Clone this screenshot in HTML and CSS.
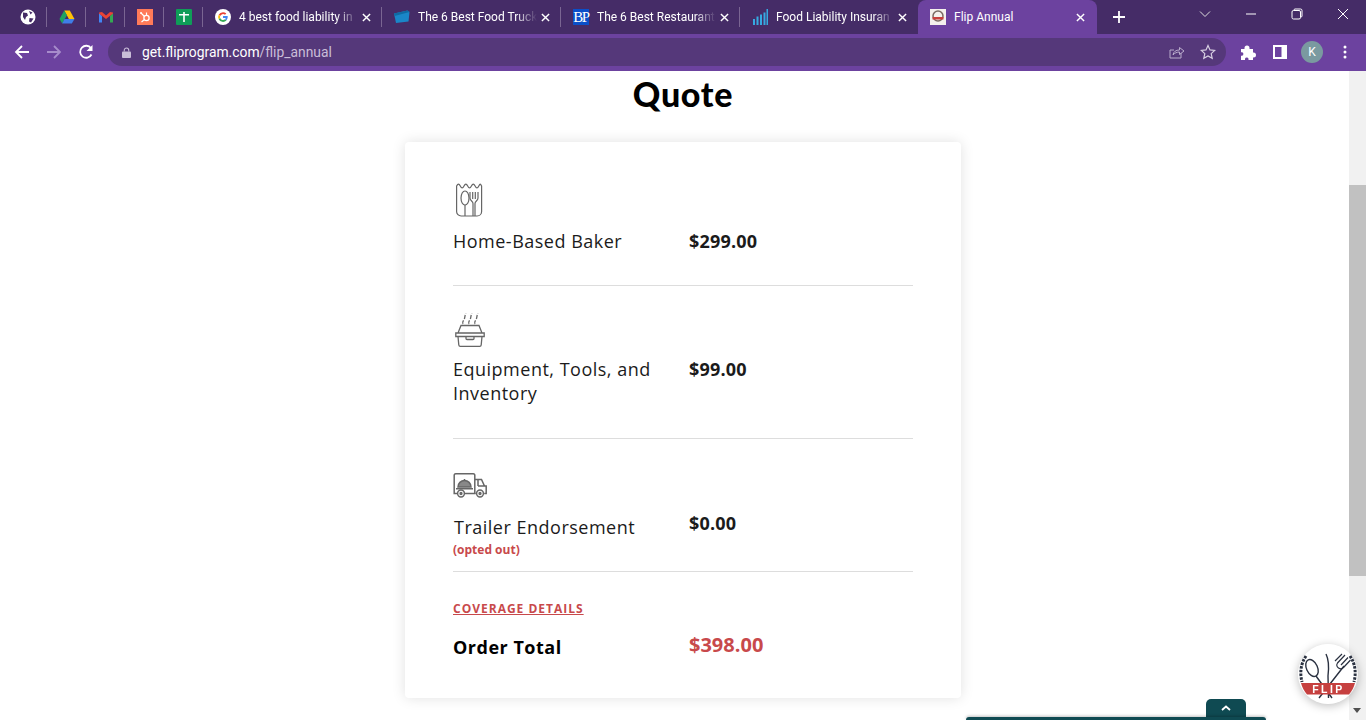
FILE: index.html
```html
<!DOCTYPE html>
<html>
<head>
    <title>Flip Annual</title>
    <link rel="stylesheet" href="styles.css">
</head>
<body>
    <svg class="defs" width="0" height="0">
        <symbol id="x" viewBox="0 0 10 10"><path d="M1 1l8 8M9 1l-8 8" fill="none" stroke="#fff" stroke-width="1.600"/></symbol>
    </svg>

    <!-- Tab strip -->
    <div class="tabstrip">
        <div class="tab pinned">
            <svg class="fav" viewBox="0 0 16 16"><circle cx="8" cy="8" r="7.500" fill="#fff"/><path d="M3 3.500l4 .5 1 2.500-2 1.500-1 3-2-3zM9 2l3.500 1.500-2 2zM9.500 9l4 .5-2.500 4-2-1z" fill="#452c67"/></svg>
        </div>
        <div class="tab pinned">
            <svg class="fav" viewBox="0 0 16 16"><path d="M5.200 1.500h5.600l4.700 8.500h-5.600z" fill="#ffc107"/><path d="M5.200 1.500L.5 10l2.700 4.500L8 6.300z" fill="#1ea362"/><path d="M5.500 10h10l-2.700 4.500H3.200z" fill="#3f7ee8"/></svg>
        </div>
        <div class="tab pinned">
            <svg class="fav" viewBox="0 0 16 16"><path d="M1 4v9.500h3V7z" fill="#4285f4"/><path d="M12 7v6.500h3V4z" fill="#34a853"/><path d="M1 3.500l3-.5 4 3.500L12 3l3 .5v1L8 10 1 4.500z" fill="#ea4335"/></svg>
        </div>
        <div class="tab pinned">
            <svg class="fav" viewBox="0 0 16 16"><rect width="16" height="16" fill="#ff7a59"/><circle cx="9.500" cy="9" r="2.600" fill="none" stroke="#fff" stroke-width="1.300"/><path d="M9.500 3.500v3M4 4l3.500 3.500M4.500 13l3-2.500" stroke="#fff" stroke-width="1.200"/><circle cx="4" cy="4" r="1" fill="#fff"/></svg>
        </div>
        <div class="tab pinned">
            <svg class="fav" viewBox="0 0 16 16"><rect width="16" height="16" rx="1" fill="#0f9d58"/><path d="M3 5h10v1.600H3zM7.200 3h1.600v10H7.200z" fill="#fff"/></svg>
        </div>
        <div class="tab">
            <svg class="fav" viewBox="0 0 16 16"><circle cx="8" cy="8" r="8" fill="#fff"/><path d="M8 3.200a4.800 4.800 0 0 1 3.300 1.300l-1.300 1.300A3 3 0 0 0 5.200 7L3.700 5.800A4.800 4.800 0 0 1 8 3.200z" fill="#ea4335"/><path d="M3.700 5.800L5.200 7a3 3 0 0 0 0 2L3.700 10.200a4.800 4.800 0 0 1 0-4.400z" fill="#fbbc05"/><path d="M3.700 10.200L5.200 9A3 3 0 0 0 10 10.300l1.400 1.200A4.800 4.800 0 0 1 3.700 10.200z" fill="#34a853"/><path d="M12.700 7.100H8v1.900h2.700a2.300 2.300 0 0 1-.7 1.300l1.400 1.200a4.800 4.800 0 0 0 1.300-4.400z" fill="#4285f4"/></svg>
            <span class="tab-title">4 best food liability in</span>
            <svg class="tab-x"><use href="#x"/></svg>
        </div>
        <div class="tab">
            <svg class="fav" viewBox="0 0 16 16"><path d="M0 4.500l13.500-3 2 1.500-1 9.500-12.500 1.500z" fill="#1a86c8"/><path d="M0 4.500l13.500-3 2 1.500L.5 7z" fill="#0f6aa3"/></svg>
            <span class="tab-title">The 6 Best Food Truck</span>
            <svg class="tab-x"><use href="#x"/></svg>
        </div>
        <div class="tab">
            <span class="fav bp">BP</span>
            <span class="tab-title">The 6 Best Restaurant</span>
            <svg class="tab-x"><use href="#x"/></svg>
        </div>
        <div class="tab tab-last">
            <svg class="fav" viewBox="0 0 16 16"><path d="M1 10h2v6H1zM4.500 7.500h2V16h-2zM8 5.500h2V16H8zM11.500 3.500h2V16h-2zM14.500 0h1.500v16h-1.500z" fill="#36a9e1"/></svg>
            <span class="tab-title">Food Liability Insuran</span>
            <svg class="tab-x"><use href="#x"/></svg>
        </div>
        <div class="tab active">
            <svg class="fav" viewBox="0 0 16 16"><rect width="16" height="16" fill="#f4f0ec"/><circle cx="8" cy="7" r="5" fill="none" stroke="#7a6a62" stroke-width="1.500"/><rect x="2.500" y="8" width="11" height="2.500" fill="#c8403c"/></svg>
            <span class="tab-title">Flip Annual</span>
            <svg class="tab-x"><use href="#x"/></svg>
        </div>
        <svg class="new-tab" viewBox="0 0 12 12"><path d="M6 0v12M0 6h12" stroke="#fff" stroke-width="1.800"/></svg>
        <div class="win-controls">
            <svg class="win-btn chevron" viewBox="0 0 12 12"><path d="M1 3.500l5 5 5-5" fill="none" stroke="#ddd" stroke-width="1"/></svg>
            <svg class="win-btn" viewBox="0 0 12 12"><path d="M1 6h10" stroke="#fff" stroke-width="1"/></svg>
            <svg class="win-btn" viewBox="0 0 12 12"><path d="M3 2.500V2a1 1 0 0 1 1-1h5.500A1.500 1.500 0 0 1 11 2.500V8a1 1 0 0 1-1 1h-.5" fill="none" stroke="#fff"/><rect x="1" y="2.500" width="8.500" height="8.500" rx="1.500" fill="none" stroke="#fff"/></svg>
            <svg class="win-btn" viewBox="0 0 12 12"><path d="M1 1l10 10M11 1L1 11" stroke="#fff" stroke-width="1"/></svg>
        </div>
    </div>

    <!-- Toolbar -->
    <div class="toolbar">
        <svg class="nav-btn" viewBox="0 0 16 16"><path d="M15 8H2M8 2L2 8l6 6" fill="none" stroke="#fff" stroke-width="1.800"/></svg>
        <svg class="nav-btn" viewBox="0 0 16 16"><path d="M1 8h13M8 2l6 6-6 6" fill="none" stroke="#a78ccb" stroke-width="1.800"/></svg>
        <svg class="nav-btn" viewBox="0 0 16 16"><path d="M13.500 10.500A6 6 0 1 1 13 4.200" fill="none" stroke="#fff" stroke-width="1.800"/><path d="M14.500 1v6h-6z" fill="#fff"/></svg>
        <div class="omnibox">
            <svg class="lock" viewBox="0 0 10 12"><path d="M2.500 5V3.500a2.500 2.500 0 0 1 5 0V5" fill="none" stroke="#c9bdd8" stroke-width="1.200"/><rect y="5" width="10" height="7" rx="1" fill="#c9bdd8"/></svg>
            <span class="url">get.fliprogram.com<span class="url-path">/flip_annual</span></span>
            <svg class="omni-icon" viewBox="0 0 16 16"><path d="M12 9v5H1V6h4" fill="none" stroke="#b9abcb" stroke-width="1"/><path d="M4 11c.5-3.500 3-5 6.500-5V3.500L15 7l-4.500 3.500V8C8 8 5.500 9 4 11z" fill="none" stroke="#b9abcb" stroke-width="1"/></svg>
            <svg class="omni-icon star" viewBox="0 0 16 16"><path d="M8 1.500l2 4.400 4.700.5-3.500 3.200 1 4.700L8 11.900l-4.200 2.400 1-4.700L1.300 6.400 6 5.900z" fill="none" stroke="#d8d0e2" stroke-width="1.200"/></svg>
        </div>
        <svg class="tool-btn puzzle" viewBox="0 0 15 15"><path d="M0 4h3.500V3a2.500 2.500 0 0 1 5 0v1H12v3.500h.5a2.500 2.500 0 0 1 0 5H12V15H7.500v-1.200a1.800 1.800 0 0 0-3.500 0V15H0v-4.200h1a1.800 1.800 0 0 0 0-3.500H0z" fill="#fff"/></svg>
        <svg class="tool-btn panel" viewBox="0 0 14 14"><path d="M0 0h14v14H0zM2 2v10h6.500V2z" fill="#fff" fill-rule="evenodd"/></svg>
        <span class="avatar">K</span>
        <svg class="menu-btn" viewBox="0 0 4 14"><circle cx="2" cy="2" r="1.500" fill="#fff"/><circle cx="2" cy="7" r="1.500" fill="#fff"/><circle cx="2" cy="12" r="1.500" fill="#fff"/></svg>
    </div>

    <div class="viewport">
        <div class="page">
            <h1 class="page-title">Quote</h1>
            <div class="card">
                <div class="item item-first">
                    <svg class="item-icon" width="28" height="34" viewBox="0 0 28 34" fill="none" stroke="#666" stroke-width="1.200">
                        <path d="M.6 3c1.300-2.600 2.400-2.600 3.700 0s2.400 2.600 3.700 0 2.400-2.600 3.700 0 2.400 2.600 3.700 0 2.400-2.600 3.700 0 2.400 2.600 3.700 0 1.500-2.600 2.800 0v25.500a4.500 4.500 0 0 1-4.500 4.500H5.100a4.500 4.500 0 0 1-4.500-4.500z"/>
                        <ellipse cx="9" cy="15" rx="4" ry="7"/>
                        <path d="M9 22v11M14 9v6c0 3 3 3 3 5.500V33M22 9v6c0 3-3 3-3 5.500V33M16.700 9v7M19.300 9v7"/>
                    </svg>
                    <div class="item-row">
                        <div class="item-name">Home-Based Baker</div>
                        <div class="item-price">$299.00</div>
                    </div>
                </div>
                <div class="item item-second">
                    <svg class="item-icon" width="30" height="34" viewBox="0 0 30 34" fill="none" stroke="#666" stroke-width="1.300">
                        <path d="M8 11c-1.500-2 1-3.500 1.500-5.500S10 2 11 .5M14 11c-1.500-2 1-3.500 1.500-5.500S16 2 17 .5M20 11c-1.500-2 1-3.500 1.500-5.500S22 2 23 .5" stroke-dasharray="4 1.500"/>
                        <path d="M6 12.500h18l3 7.500H3zM.8 20h28.400v3.500H.8zM3 23.500l.8 8.500a1.500 1.500 0 0 0 1.500 1.300h19.400a1.500 1.500 0 0 0 1.500-1.300l.8-8.500M11 23.500v2a1 1 0 0 0 1 1h6a1 1 0 0 0 1-1v-2"/>
                    </svg>
                    <div class="item-row">
                        <div class="item-name">Equipment, Tools, and Inventory</div>
                        <div class="item-price">$99.00</div>
                    </div>
                </div>
                <div class="item item-third">
                    <svg class="item-icon" width="34" height="25" viewBox="0 0 34 25" fill="none" stroke="#666" stroke-width="1.500">
                        <path d="M4 20.500H1.200V2A1.500 1.500 0 0 1 2.700.8h17.600a1.500 1.500 0 0 1 1.500 1.200v18.500H12M21.800 6.500h6.700l3 6.500h1.700v7.500h-2M21.800 20.500h1M25 13h6.500M25 6.500V13"/>
                        <path d="M5 14a6.500 6.500 0 0 1 13 0z" fill="#888"/>
                        <path d="M3 15.800h17M11.500 7.500V6"/>
                        <circle cx="8" cy="20.500" r="3.400"/><circle cx="8" cy="20.500" r=".9"/>
                        <circle cx="27" cy="20.500" r="3.400"/><circle cx="27" cy="20.500" r=".9"/>
                    </svg>
                    <div class="item-row">
                        <div>
                            <div class="item-name trailer-name">Trailer Endorsement</div>
                            <div class="opted">(opted out)</div>
                        </div>
                        <div class="item-price">$0.00</div>
                    </div>
                </div>
                <a class="coverage" href="#">Coverage Details</a>
                <div class="item-row total-row">
                    <div class="total-label">Order Total</div>
                    <div class="total-price">$398.00</div>
                </div>
            </div>
        </div>
        <div class="scrollbar">
            <div class="scroll-thumb"></div>
            <div class="scroll-arrow"></div>
        </div>
    </div>

    <!-- Floating bits over the page -->
    <div class="drawer">
        <div class="drawer-tab">
            <svg viewBox="0 0 10 6" width="10" height="6"><path d="M1 5l4-3.500L9 5" fill="none" stroke="#fff" stroke-width="1.800"/></svg>
        </div>
        <div class="drawer-bar"></div>
    </div>
    <div class="badge">
        <svg viewBox="0 0 60 60" width="60" height="60">
            <circle cx="30" cy="30" r="29.500" fill="#fff"/>
            <path d="M8 12C2 21 2 30 4 38M52 12c6 9 6 18 4 26" fill="none" stroke="#2a3140" stroke-width="3" stroke-dasharray="2.500 1.200"/>
            <ellipse cx="14" cy="24" rx="5.500" ry="9" transform="rotate(-25 14 24)" fill="none" stroke="#2a3140" stroke-width="1.400"/>
            <path d="M18 32l16 22M28 10c2.500 5 3 14 2 22l.5 22M46 22L21 54" fill="none" stroke="#2a3140" stroke-width="1.400"/>
            <path d="M47 11l-7.500 8c-1.500 2-.5 4 1 5s3.500 1.500 5-.5l7-7.500M50 13.500l-7 7.500M44 10l-7 7" fill="none" stroke="#2a3140" stroke-width="1.200"/>
            <path d="M3 39h54c-1 4-3 8-6 11.500H9C6 47 4 43 3 39z" fill="#c6403f"/>
            <text class="badge-text" x="30.500" y="49" text-anchor="middle">FLIP</text>
        </svg>
    </div>
</body>
</html>
```
FILE: styles.css
```css
body {
    margin: 0;
    height: 720px;
    overflow: hidden;
    background-color: #fff;
    font-family: "Open Sans", Arial, sans-serif;
    color: #1b1b1b;
}

.defs {
    display: block;
    height: 0;
}

/* Tab strip */
.tabstrip {
    display: flex;
    align-items: stretch;
    height: 34px;
    padding-left: 8px;
    background-color: #452c67;
    color: #fff;
    font-family: Roboto, Arial, sans-serif;
    font-size: 12px;
}

.tab {
    display: flex;
    align-items: center;
    box-sizing: border-box;
    width: 179px;
    height: 20px;
    margin-top: 7px;
    padding: 0 10px 0 12px;
    border-right: 1px solid #7a6592;
}

.tab.pinned {
    width: 39px;
    padding: 0 0 0 12px;
}

.tab.tab-last {
    width: 178px;
    border-right-color: transparent;
}

.tab.active {
    height: 34px;
    margin-top: 0;
    padding-right: 12px;
    border: 0;
    border-radius: 8px 8px 0 0;
    background-color: #6c429f;
}

.fav {
    flex: none;
    display: block;
    width: 16px;
    height: 16px;
}

.fav.bp {
    background-color: #0b4fc9;
    color: #fff;
    font-family: "Liberation Serif", serif;
    font-size: 15px;
    line-height: 16px;
    text-align: center;
    letter-spacing: -1.500px;
}

.tab-title {
    flex: 1;
    min-width: 0;
    margin-left: 8px;
    white-space: nowrap;
    -webkit-mask-image: linear-gradient(to right, #000 82%, transparent 100%);
    mask-image: linear-gradient(to right, #000 82%, transparent 100%);
}

.tab.active .tab-title {
    -webkit-mask-image: none;
    mask-image: none;
}

.tab-x {
    flex: none;
    width: 9px;
    height: 9px;
    margin-left: 4px;
}

.new-tab {
    align-self: center;
    width: 12px;
    height: 12px;
    margin-left: 16px;
}

.win-controls {
    display: flex;
    align-items: center;
    margin-left: auto;
    padding-right: 17px;
    padding-bottom: 6px;
}

.win-btn {
    display: block;
    width: 12px;
    height: 12px;
    margin-left: 34px;
}

/* Toolbar */
.toolbar {
    display: flex;
    align-items: center;
    box-sizing: border-box;
    height: 37px;
    padding: 0 0 1px 14px;
    background-color: #6c429f;
}

.nav-btn {
    flex: none;
    width: 16px;
    height: 16px;
    margin-right: 16px;
}

.omnibox {
    display: flex;
    align-items: center;
    box-sizing: border-box;
    flex: none;
    width: 1118px;
    height: 28px;
    margin-left: -2px;
    padding: 0 10px 0 14px;
    border-radius: 14px;
    background-color: #55387a;
}

.lock {
    width: 9px;
    height: 11px;
    margin-right: 11px;
}

.url {
    flex: 1;
    color: #fff;
    font-family: Roboto, Arial, sans-serif;
    font-size: 13.850px;
}

.url-path {
    color: #c9bdd8;
}

.omni-icon {
    width: 16px;
    height: 16px;
}

.omni-icon.star {
    margin-left: 15px;
}

.tool-btn {
    flex: none;
}

.puzzle {
    width: 15px;
    height: 15px;
    margin-left: 15px;
}

.panel {
    width: 14px;
    height: 14px;
    margin-left: 17px;
}

.avatar {
    flex: none;
    width: 22px;
    height: 22px;
    margin-left: 14px;
    border-radius: 50%;
    background-color: #7a9aa0;
    color: #fff;
    font-family: Roboto, Arial, sans-serif;
    font-size: 12px;
    line-height: 22px;
    text-align: center;
}

.menu-btn {
    flex: none;
    width: 4px;
    height: 14px;
    margin-left: 20px;
}

/* Page */
.viewport {
    display: flex;
    height: 649px;
}

.page {
    flex: 1;
    padding-left: 405px;
}

.page-title {
    width: 556px;
    margin: 0;
    color: #000;
    font-family: Lato, Arial, sans-serif;
    font-size: 34px;
    font-weight: 900;
    letter-spacing: 0.700px;
    line-height: 46px;
    text-align: center;
}

.card {
    box-sizing: border-box;
    width: 556px;
    height: 556px;
    margin-top: 25px;
    padding: 0 48px;
    border-radius: 4px;
    background-color: #fff;
    box-shadow: 0 0 14px rgba(0, 0, 0, 0.12);
}

.item {
    border-bottom: 1px solid #ddd;
}

.item-first {
    height: 102px;
    padding-top: 41px;
}

.item-second {
    height: 125px;
    padding-top: 27px;
}

.item-third {
    height: 98px;
    padding-top: 34px;
}

.item-icon {
    display: block;
}

.item-first .item-icon {
    margin-left: 3px;
}

.item-second .item-icon {
    margin-left: 2px;
}

.item-row {
    display: grid;
    grid-template-columns: 236px 1fr;
    margin-top: 12px;
}

.item-second .item-row {
    margin-top: 10px;
}

.item-third .item-row {
    margin-top: 13px;
}

.item-name {
    padding-right: 20px;
    font-size: 18px;
    letter-spacing: 0.500px;
    line-height: 24px;
}

.trailer-name {
    margin-top: 4px;
    margin-left: 1px;
}

.item-price {
    font-size: 18px;
    font-weight: 700;
    letter-spacing: 0.200px;
    line-height: 24px;
}

.opted {
    color: #c8494b;
    font-size: 12px;
    font-weight: 700;
    line-height: 22px;
}

.coverage {
    display: inline-block;
    margin-top: 28px;
    color: #c8494b;
    font-size: 12px;
    font-weight: 700;
    letter-spacing: 1px;
    line-height: 18px;
    text-transform: uppercase;
}

.total-row {
    margin-top: 15px;
    align-items: center;
}

.total-label {
    color: #000;
    font-size: 18px;
    font-weight: 700;
    letter-spacing: 0.500px;
    line-height: 28px;
}

.total-price {
    margin-top: -4px;
    color: #c8494b;
    font-size: 20px;
    font-weight: 700;
    line-height: 28px;
}

/* Scrollbar */
.scrollbar {
    position: relative;
    flex: none;
    width: 17px;
    background-color: #f1f1f1;
}

.scroll-thumb {
    height: 391px;
    margin-top: 114px;
    background-color: #c1c1c1;
}

.scroll-arrow {
    position: absolute;
    left: 4px;
    bottom: 7px;
    width: 0;
    height: 0;
    border-top: 5px solid #505050;
    border-left: 4.500px solid transparent;
    border-right: 4.500px solid transparent;
}

/* Floating */
.drawer {
    position: fixed;
    left: 966px;
    bottom: 0;
    width: 300px;
}

.drawer-tab {
    display: flex;
    align-items: center;
    justify-content: center;
    width: 40px;
    height: 18px;
    margin-left: 240px;
    border-radius: 5px 5px 0 0;
    background-color: #0f4a52;
}

.drawer-bar {
    height: 3px;
    border-radius: 4px 4px 0 0;
    background-color: #0f4a52;
    box-shadow: 0 -1px 3px rgba(0, 0, 0, 0.25);
}

.badge {
    position: fixed;
    left: 1298px;
    top: 644px;
    width: 60px;
    height: 60px;
    border-radius: 50%;
    box-shadow: 0 2px 10px rgba(0, 0, 0, 0.25);
}

.badge svg {
    display: block;
}

.badge-text {
    fill: #fff;
    font-family: "Liberation Sans", Arial, sans-serif;
    font-size: 10.500px;
    font-weight: 700;
    letter-spacing: 2.500px;
}
```
